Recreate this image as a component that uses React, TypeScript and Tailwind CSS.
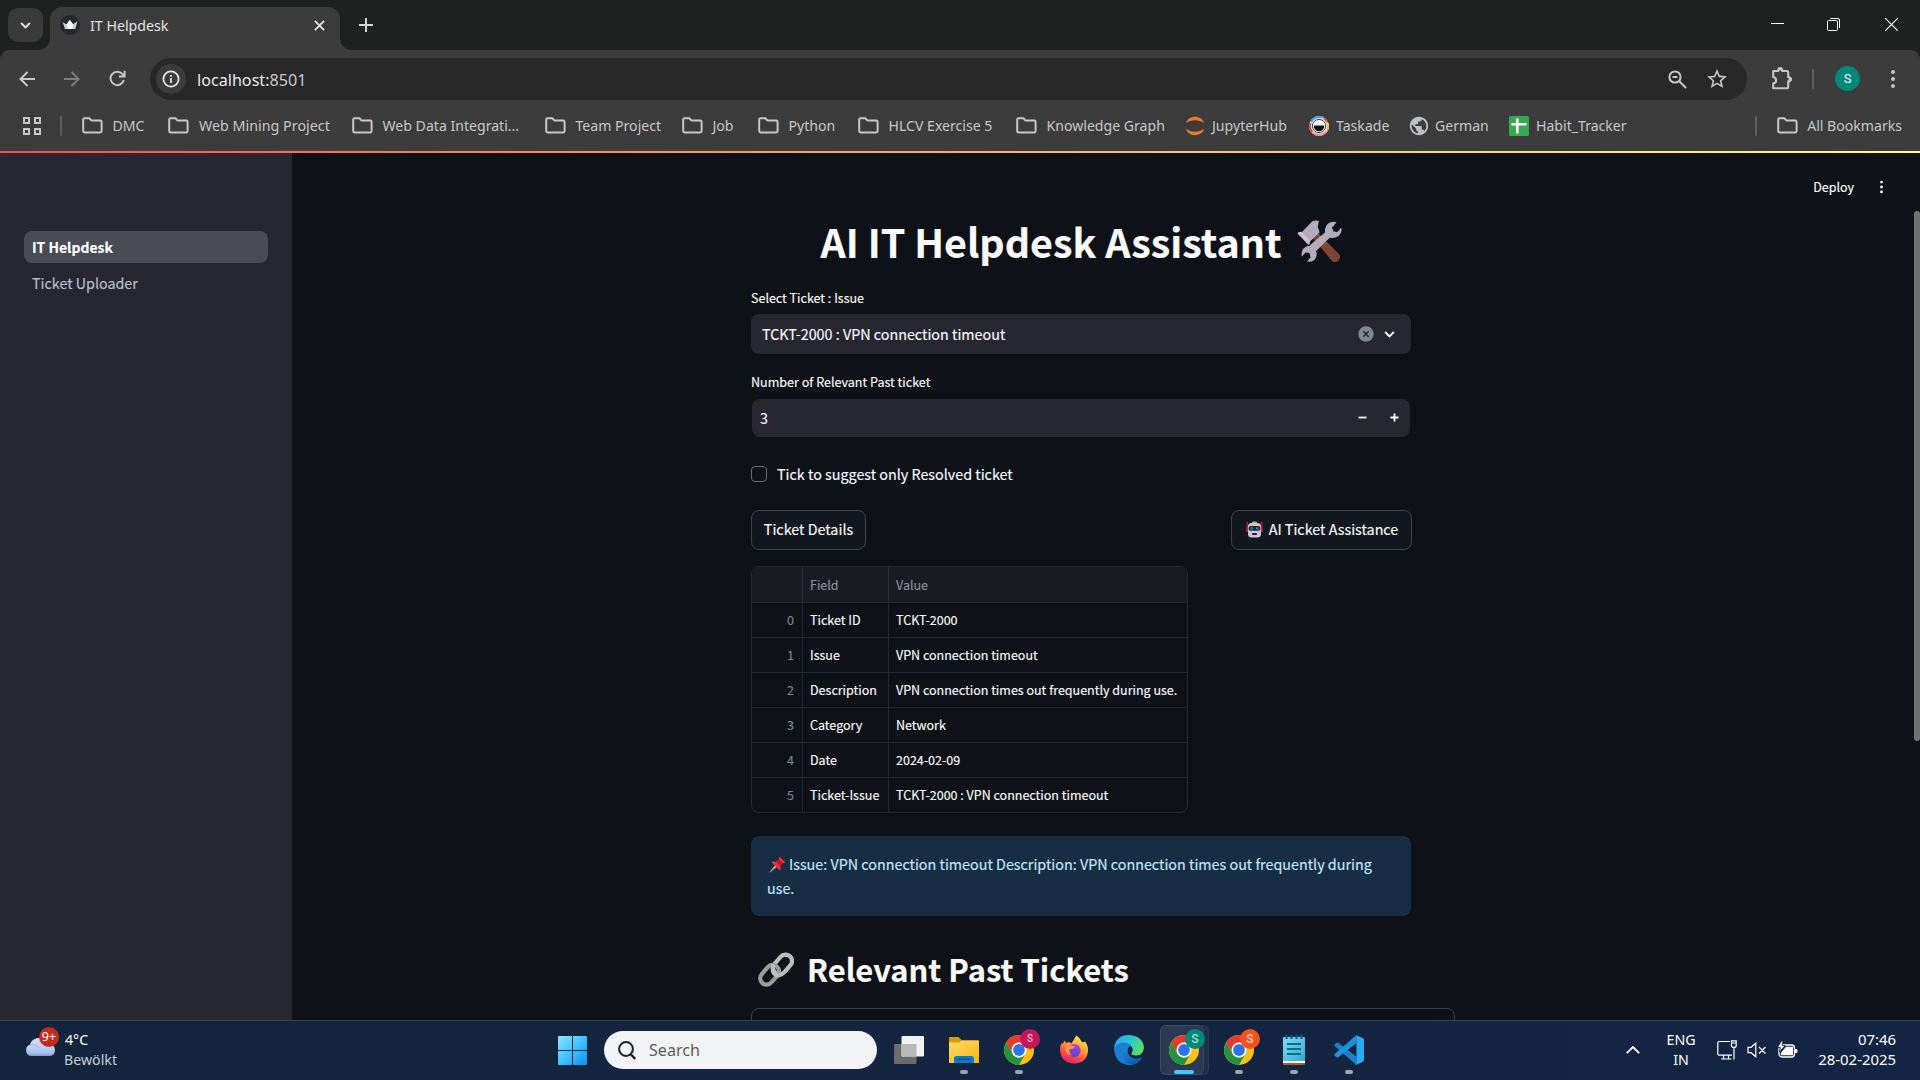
import React from 'react';
import { MdStarBorder, MdPublic } from 'react-icons/md';

type IconProps = { className?: string };

/* ---------- browser icons ---------- */

const Folder = () => (
  <svg viewBox="0 0 21 17" className="h-[17px] w-[21px] shrink-0" fill="none" stroke="#c7c7c7" strokeWidth="2" strokeLinejoin="round">
    <path d="M1.2 14V2.6Q1.2 1.2 2.6 1.2H7.4L9.6 3.6H18.2Q19.6 3.6 19.6 5V14Q19.6 15.4 18.2 15.4H2.6Q1.2 15.4 1.2 14Z" />
  </svg>
);

const AppsGrid = () => (
  <svg viewBox="0 0 20 20" className="h-5 w-5" fill="none" stroke="#c7c7c7" strokeWidth="2">
    <path d="M2 2h5v5H2zM13 2h5v5h-5zM2 13h5v5H2zM13 13h5v5h-5z" />
  </svg>
);

const Jupyter = () => (
  <svg viewBox="0 0 20 20" className="h-5 w-5 shrink-0" fill="#f37726">
    <path d="M1 7.2C3 -1.4 17 -1.4 19 7.2C14 3.4 6 3.4 1 7.2Z" />
    <path d="M1 12.8C3 21.4 17 21.4 19 12.8C14 16.6 6 16.6 1 12.8Z" />
  </svg>
);

const Taskade = () => (
  <svg viewBox="0 0 20 20" className="h-5 w-5 shrink-0">
    <circle cx="10" cy="10" r="10" fill="#e9e9e9" />
    <path d="M2 6A9 9 0 0 1 14 1.9" stroke="#4ea3e0" strokeWidth="2" fill="none" />
    <path d="M14.5 2.2A9 9 0 0 1 18.4 6.5" stroke="#e5484d" strokeWidth="2" fill="none" />
    <path d="M18.8 7.5A9 9 0 0 1 17.5 15" stroke="#f5c33b" strokeWidth="2" fill="none" />
    <path d="M17 15.6A9 9 0 0 1 4 16.7" stroke="#f08ba0" strokeWidth="2" fill="none" />
    <path d="M3.5 16.2A9 9 0 0 1 1.5 7" stroke="#e5484d" strokeWidth="2" fill="none" />
    <circle cx="10" cy="10" r="7.4" fill="#fff" />
    <circle cx="10" cy="10" r="6.6" fill="none" stroke="#222" strokeWidth=".9" />
    <path d="M5 9.600H15V11.500Q14 15.200 10 15.200Q6 15.200 5 11.500Z" fill="#111" />
  </svg>
);

const Globe = () => <MdPublic className="-mr-[2px] -ml-px h-[22px] w-[22px] shrink-0 text-[#bdc1c6]" />;

const Sheet = () => (
  <svg viewBox="0 0 20 20" className="h-5 w-5 shrink-0">
    <rect width="20" height="20" rx="1.5" fill="#34a853" />
    <path d="M8.3 2.5V17.5M2.5 8.3H17.5" stroke="#fff" strokeWidth="2.6" />
  </svg>
);

const Crown = () => (
  <svg viewBox="0 0 20 20" className="h-5 w-5">
    <circle cx="10" cy="10" r="10" fill="#262730" />
    <path d="M2.6 7L6.6 9.6L9.7 5L13 9.2L17.5 6.2L15.2 14H5Z" fill="#cfcfcf" />
    <path d="M6.6 9.6L9.7 5L13 9.2L12 14H8Z" fill="#fff" />
  </svg>
);

const Puzzle = () => (
  <svg viewBox="0 0 22 25" className="h-[25px] w-[22px]" fill="none" stroke="#c7c7c7" strokeWidth="2.1" strokeLinejoin="round">
    <path d="M2.2 5H7.2C7 1 11.4 1 11.2 5H16Q17.2 5 17.2 6.2V11.2C21 11 21 15.6 17.2 15.4V21Q17.2 22.2 16 22.2H2.2V17.6C6 17 6 11.6 2.2 11Z" />
    <path d="M7.2 4.6C7.2 1 11.2 1 11.2 4.6ZM17.6 11.2C20.8 11.2 20.8 15.4 17.6 15.4Z" fill="#c7c7c7" stroke="none" />
  </svg>
);

const Dots = ({ className }: IconProps) => (
  <svg viewBox="0 0 6 20" className={className} fill="currentColor">
    <circle cx="3" cy="3" r="2" />
    <circle cx="3" cy="10" r="2" />
    <circle cx="3" cy="17" r="2" />
  </svg>
);

/* ---------- emoji drawings ---------- */

const Tools = () => (
  <svg viewBox="0 0 46 43" className="h-[43px] w-[46px]">
    <path d="M15 17L20 12L42.5 34.5Q44 38 41 41Q38 43.5 34.5 40.5Z" fill="#7d4533" />
    <path d="M4.5 12.5L15 1.5Q17 .2 22 .8L20.8 6Q20.5 8 22 10L22.5 12.5L12.5 22Z" fill="#b4acbc" />
    <path d="M1.2 12.2L4.5 11.8L13 21L12.5 24.2Q11.5 25 10.5 24L1 14Q.3 13 1.2 12.2Z" fill="#cdc4d6" />
    <path d="M13 25L28 12.5Q27.5 6 32 3Q36 .8 39.5 2.5L35 7.5L36.5 11.5L40.5 12L44.2 7.5Q45.8 12.5 41.5 16Q37 19 33 17.5L19 31Q21 36 17.5 40Q14.5 42.5 10 41.5L13.5 37.5L12.5 33L8.5 32.5L5 36.5Q3.5 31 7 28Q9.5 25.5 13 26Z" fill="#b4acbc" />
  </svg>
);

const Robot = () => (
  <svg viewBox="0 0 17 17" className="h-[17px] w-[17px]">
    <path d="M1.2 0.5V9M15.8 0.5V9" stroke="#d1263c" strokeWidth="1.1" />
    <rect x="0.2" y="6" width="2.2" height="5" rx="1" fill="#c9213c" />
    <rect x="14.6" y="6" width="2.2" height="5" rx="1" fill="#c9213c" />
    <rect x="6" y="0.4" width="5" height="3" rx="1" fill="#f9a231" />
    <rect x="2" y="2" width="13" height="14.6" rx="3.6" fill="#cdc4d6" />
    <rect x="2.6" y="5" width="11.8" height="4.8" rx="2" fill="#26232f" />
    <circle cx="5.8" cy="7.4" r="1.3" fill="#1b84c4" />
    <circle cx="11.2" cy="7.4" r="1.3" fill="#1b84c4" />
    <rect x="6" y="12" width="5" height="2" rx=".8" fill="#26232f" />
  </svg>
);

const Pin = () => (
  <svg viewBox="0 0 17 17" className="h-[17px] w-[17px]">
    <path d="M0.8 16.2L6.2 9.4L7.8 10.8Z" fill="#b4acbc" stroke="#b4acbc" strokeWidth=".6" />
    <path d="M2.6 6.2Q4 4.6 6.6 6L10 3.6Q9.6 1.6 10.8 .8L16.4 6.2Q15.4 7.6 13.4 7L11.2 10.4Q12.4 13 10.8 14.4Z" fill="#f8312f" />
    <path d="M7 5.8L11.3 10.3L13.4 7L10 3.6Z" fill="#ca0b4a" />
  </svg>
);

const Link = () => (
  <svg viewBox="0 0 36 37" className="h-[37px] w-[36px]" fill="none" strokeWidth="4.2">
    <rect x="-6.4" y="-11" width="12.8" height="22" rx="6.4" transform="translate(24.6 13.4) rotate(41)" stroke="#bdbdbd" />
    <rect x="-6.4" y="-11" width="12.8" height="22" rx="6.4" transform="translate(11.6 23.8) rotate(41)" stroke="#9b9b9b" />
    <path d="M15.5 13.5Q13.6 18 16 22.5Q18.5 25.6 23 23.6" stroke="#bdbdbd" />
  </svg>
);

/* ---------- taskbar icons ---------- */

const Cloud = () => (
  <svg viewBox="0 0 30 20" className="h-5 w-[30px]">
    <defs>
      <linearGradient id="cloud" x1="0" y1="0" x2="0" y2="1">
        <stop offset="0" stopColor="#d6e4fb" />
        <stop offset=".8" stopColor="#a9c3f0" />
        <stop offset="1" stopColor="#7d9fd8" />
      </linearGradient>
    </defs>
    <path d="M6 20A6 6 0 0 1 5 8.5A9 9 0 0 1 20 4.5Q24 3.5 26.5 8Q30 10 30 14.5Q29.5 20 24 20Z" fill="url(#cloud)" />
    <path d="M5 9Q10 7 14 12" stroke="#9db8e8" fill="none" />
  </svg>
);

const WindowsLogo = () => (
  <svg viewBox="0 0 29 29" className="h-[29px] w-[29px]">
    <defs>
      <linearGradient id="win" x1="0" y1="0" x2="1" y2="1">
        <stop offset="0" stopColor="#8fe3ff" />
        <stop offset=".5" stopColor="#3fc3fd" />
        <stop offset="1" stopColor="#0c90f8" />
      </linearGradient>
    </defs>
    <path d="M1 0H14V14H0V1Q0 0 1 0ZM15 0H28Q29 0 29 1V14H15ZM0 15H14V29H1Q0 29 0 28ZM15 15H29V28Q29 29 28 29H15Z" fill="url(#win)" />
  </svg>
);

const TaskView = () => (
  <svg viewBox="0 0 30 28" className="h-7 w-[30px]">
    <rect y="8" width="22.5" height="20" rx="1" fill="#6b6b6b" />
    <rect x="7.5" y="0" width="22.5" height="20.5" rx="1" fill="#f1f1f1" />
    <rect x="7.5" y="8" width="15" height="12.5" fill="#b9b9b9" />
  </svg>
);

const Explorer = () => (
  <svg viewBox="0 0 30 26" className="h-[26px] w-[30px]">
    <defs>
      <linearGradient id="exp" x1="0" y1="0" x2="1" y2="1">
        <stop offset="0" stopColor="#ffdc6b" />
        <stop offset="1" stopColor="#f8b70e" />
      </linearGradient>
    </defs>
    <path d="M0 1Q0 0 1 0H9.5L13 3.5V9H0Z" fill="#dd9a05" />
    <path d="M0 5.5H10L13 3.3H29Q30 3.3 30 4.3V26H0Z" fill="url(#exp)" />
    <path d="M5 26V21.5Q5 19 7.5 19H22.5Q25 19 25 21.5V26Z" fill="#1278c8" />
    <path d="M8.5 22.5H21.5" stroke="#0a4d8c" strokeWidth="1.3" />
  </svg>
);

const Chrome = () => (
  <svg viewBox="0 0 30 30" className="h-[30px] w-[30px]">
    <circle cx="15" cy="15" r="15" fill="#fbc116" />
    <path d="M2.01 7.5A15 15 0 0 1 27.99 7.5H15L8.5 18.75Z" fill="#e33b2e" />
    <path d="M2.01 7.5L8.5 18.75A7.5 7.5 0 0 0 21.5 18.75L15 30A15 15 0 0 1 2.01 7.5Z" fill="#229342" />
    <circle cx="15" cy="15" r="7.5" fill="#fff" />
    <circle cx="15" cy="15" r="5.9" fill="#2b74e8" />
  </svg>
);

const ProfileChrome = ({ badge }: { badge: string }) => (
  <div className="relative h-[30px] w-[30px]">
    <Chrome />
    <span className={`absolute -top-[6px] left-4 flex h-5 w-5 items-center justify-center rounded-full font-['Roboto'] leading-none font-medium text-white/70 ${badge}`}>
      S
    </span>
  </div>
);

const Firefox = () => (
  <svg viewBox="0 0 30 30" className="h-[30px] w-[30px]">
    <defs>
      <linearGradient id="fox" x1=".8" y1="0" x2=".3" y2="1">
        <stop offset="0" stopColor="#fff14f" />
        <stop offset=".4" stopColor="#ffa436" />
        <stop offset=".7" stopColor="#ff4f45" />
        <stop offset="1" stopColor="#e0226f" />
      </linearGradient>
      <linearGradient id="foxcore" x1="0" y1="0" x2="0" y2="1">
        <stop offset="0" stopColor="#b23ff0" />
        <stop offset="1" stopColor="#5b46c4" />
      </linearGradient>
    </defs>
    <path d="M1 15Q1 10 3 7.5L3.3 9L6 5.5L7 8Q10 6.5 12.5 8.5Q15 4 17.5 .5Q21 3 23 7Q24.500 7.5 26 6.5Q29.5 11 29 16Q28 28 15 28.5Q2 28 1 15Z" fill="url(#fox)" />
    <circle cx="15" cy="15.5" r="6.6" fill="url(#foxcore)" />
    <path d="M6.5 11.5Q11 9.5 16.5 11.5Q14 14.5 10.5 14Q9.5 18 13 20.5Q8 20 6.5 16Z" fill="#ff9a2e" />
  </svg>
);

const Edge = () => (
  <svg viewBox="0 0 30 30" className="h-[30px] w-[30px]">
    <defs>
      <linearGradient id="edgetop" x1="0" y1=".3" x2="1" y2=".7">
        <stop offset="0" stopColor="#2aa9ea" />
        <stop offset=".5" stopColor="#2fc5cf" />
        <stop offset="1" stopColor="#66e34e" />
      </linearGradient>
      <linearGradient id="edgelow" x1="0" y1="0" x2="1" y2="1">
        <stop offset="0" stopColor="#1b8fe0" />
        <stop offset="1" stopColor="#0b4f9e" />
      </linearGradient>
    </defs>
    <path d="M0 13Q2 0 15 0Q29 1 30 13Q29 20.5 22 20.5Q17 20.5 17.5 18Q20 15 17.5 11.5Q12 5 0 13Z" fill="url(#edgetop)" />
    <path d="M0 13.5Q4 6.5 11 7.5Q16 8 18 12Q12 9.5 9.5 15Q8.5 25 20 25.5Q25 25.5 28 23Q23.5 30 15 30Q1 29 0 13.5Z" fill="#1a7fd4" />
    <path d="M8 15.5Q10 10.5 15.5 11Q12 15 15 20Q19 25.5 28 22.3Q25 28 18 29.7Q7 27 8 15.5Z" fill="url(#edgelow)" />
  </svg>
);

const Notepad = () => (
  <svg viewBox="0 0 22 30" className="h-[30px] w-[22px]">
    <defs>
      <linearGradient id="pad" x1="0" y1="0" x2="1" y2="1">
        <stop offset="0" stopColor="#7fdcf0" />
        <stop offset="1" stopColor="#35a9cf" />
      </linearGradient>
    </defs>
    <rect y="24" width="22" height="6" rx="1" fill="#b35c1e" />
    <rect y="22" width="22" height="6" fill="#f3f3f3" />
    <path d="M0 3Q0 2 1 2H21Q22 2 22 3V26H0Z" fill="url(#pad)" />
    <path d="M3.5 0V4M8.5 0V4M13.5 0V4M18.5 0V4" stroke="#0a5f86" strokeWidth="2.2" />
    <path d="M4 9H18M4 14H18M4 19H18" stroke="#0a6c93" strokeWidth="1.8" />
  </svg>
);

const VsCode = () => (
  <svg viewBox="0 0 30 30" className="h-[30px] w-[30px]">
    <path d="M.6 9.5L2.5 7.8Q3.3 7.3 4.2 7.8L22.5 21.8V30L.6 11Q0 10.2 .6 9.5Z" fill="#1b7fc9" />
    <path d="M.6 20.5L2.5 22.2Q3.3 22.7 4.2 22.2L22.5 8.2V0L.6 19Q0 19.8 .6 20.5Z" fill="#1f90dc" />
    <path d="M22.2 .2L29 3.3Q30 3.9 30 5V25Q30 26.1 29 26.7L22.2 29.8Q21.5 30 20.8 29.3Q22.5 30 22.5 28V2Q22.5 0 20.8 .7Q21.5 0 22.2 .2Z" fill="#2aa9f5" />
  </svg>
);

/* ---------- data ---------- */

const bookmarks = [
  { label: 'DMC', w: 'w-[86px]', icon: <Folder /> },
  { label: 'Web Mining Project', w: 'w-[184px]', icon: <Folder />, wide: true },
  { label: 'Web Data Integrati...', w: 'w-[193px]', icon: <Folder /> },
  { label: 'Team Project', w: 'w-[137px]', icon: <Folder /> },
  { label: 'Job', w: 'w-[76px]', icon: <Folder /> },
  { label: 'Python', w: 'w-[100px]', icon: <Folder /> },
  { label: 'HLCV Exercise 5', w: 'w-[158px]', icon: <Folder /> },
  { label: 'Knowledge Graph', w: 'w-[169px]', icon: <Folder /> },
  { label: 'JupyterHub', w: 'w-[124px]', icon: <Jupyter />, site: true },
  { label: 'Taskade', w: 'w-[100px]', icon: <Taskade />, site: true },
  { label: 'German', w: 'w-[100px]', icon: <Globe />, site: true },
  { label: 'Habit_Tracker', w: 'w-[130px]', icon: <Sheet />, site: true },
];

const rows = [
  ['Ticket ID', 'TCKT-2000'],
  ['Issue', 'VPN connection timeout'],
  ['Description', 'VPN connection times out frequently during use.'],
  ['Category', 'Network'],
  ['Date', '2024-02-09'],
  ['Ticket-Issue', 'TCKT-2000 : VPN connection timeout'],
];

const apps = [
  { name: 'explorer', icon: <Explorer />, running: true },
  { name: 'chrome-1', icon: <ProfileChrome badge="bg-[#c2185b] text-[10px]" />, running: true },
  { name: 'firefox', icon: <Firefox />, running: false },
  { name: 'edge', icon: <Edge />, running: false },
  { name: 'chrome-2', icon: <ProfileChrome badge="bg-[#00897b] text-[12px]" />, running: true, active: true },
  { name: 'chrome-3', icon: <ProfileChrome badge="bg-[#f4511e] text-[12px]" />, running: true },
  { name: 'notepad', icon: <Notepad />, running: true },
  { name: 'vscode', icon: <VsCode />, running: true },
];

/* ---------- sections ---------- */

function TabStrip() {
  return (
    <div className="flex h-[50px] bg-[#1f2120] text-[#e3e3e3]">
      <div className="mt-2 ml-2 flex h-[34px] w-[35px] items-center justify-center rounded-[10px] bg-[#3a3a3a]">
        <svg viewBox="0 0 12 8" className="h-[7px] w-[11px]" fill="none" stroke="#e3e3e3" strokeWidth="2.2"><path d="M1 1.2L6 6.2L11 1.2" /></svg>
      </div>
      <div className="relative mt-[7px] ml-[7px] flex w-[290px] items-center rounded-t-[12px] bg-[#3c3c3c] pb-[7px] pl-[10px]">
        <svg viewBox="0 0 12 12" className="absolute bottom-0 -left-3 h-3 w-3"><path d="M12 0V12H0A12 12 0 0 0 12 0Z" fill="#3c3c3c" /></svg>
        <svg viewBox="0 0 12 12" className="absolute -right-3 bottom-0 h-3 w-3"><path d="M0 0V12H12A12 12 0 0 1 0 0Z" fill="#3c3c3c" /></svg>
        <Crown />
        <span className="ml-[10px] flex-1 pt-px text-[14.2px] leading-5">IT Helpdesk</span>
        <svg viewBox="0 0 12 12" className="mr-[15px] h-[11px] w-[11px]" stroke="#e3e3e3" strokeWidth="2"><path d="M1 1L11 11M11 1L1 11" /></svg>
      </div>
      <svg viewBox="0 0 14 14" className="mt-[18px] ml-[19px] h-[14px] w-[14px]" stroke="#d5d5d5" strokeWidth="2"><path d="M7 0V14M0 7H14" /></svg>
      <div className="ml-auto flex items-center pr-[22px] pb-px">
        <svg viewBox="0 0 13 13" className="mr-[43px] h-[13px] w-[13px]" stroke="#fff"><path d="M0 5.5H13" /></svg>
        <svg viewBox="0 0 13 13" className="mr-[45px] h-[13px] w-[13px]" fill="none" stroke="#fff"><rect x=".5" y="2.5" width="10" height="10" rx="1" /><path d="M3 .5H11Q12.5 .5 12.5 2V10" /></svg>
        <svg viewBox="0 0 13 13" className="h-[13px] w-[13px]" stroke="#fff" strokeWidth="1.1"><path d="M0 0L13 13M13 0L0 13" /></svg>
      </div>
    </div>
  );
}

function Toolbar() {
  return (
    <div className="bg-[#1f2120]">
      <div className="flex h-[50px] items-center rounded-t-[9px] bg-[#3c3c3c] pt-2">
        <svg viewBox="0 0 16 16" className="mb-px ml-[19px] h-4 w-4" fill="none" stroke="#c7c7c7" strokeWidth="2"><path d="M16 8H2M8.5 1L1.5 8L8.5 15" /></svg>
        <svg viewBox="0 0 16 16" className="mb-px ml-[29px] h-4 w-4" fill="none" stroke="#7d7d7d" strokeWidth="2"><path d="M0 8H14M7.5 1L14.5 8L7.5 15" /></svg>
        <svg viewBox="0 0 17 17" className="mb-px ml-[29px] h-[17px] w-[17px]" fill="none" stroke="#c7c7c7" strokeWidth="2"><path d="M14.8 10A6.7 6.7 0 1 1 13.5 4.2L15 6" /><path d="M15.6 .8V6.6H9.8" /></svg>
        <div className="ml-[24px] flex h-[42px] w-[1597px] items-center rounded-full bg-[#282828] pl-[6px]">
          <div className="flex h-[30px] w-[30px] items-center justify-center rounded-full bg-[#3c3c3c]">
            <svg viewBox="0 0 18 18" className="h-[18px] w-[18px]" fill="none" stroke="#e3e3e3" strokeWidth="1.8"><circle cx="9" cy="9" r="7.6" /><path d="M9 8V13M9 5V6.8" /></svg>
          </div>
          <span className="ml-[11px] flex-1 pt-px text-[16.15px] leading-6 text-[#e8e8e8]">localhost:<span className="text-[#c7c7c7]">8501</span></span>
          <svg viewBox="0 0 19 19" className="mr-[18px] h-[19px] w-[19px]" fill="none" stroke="#c7c7c7" strokeWidth="2"><circle cx="7" cy="7" r="5.6" /><path d="M11.3 11.3L18 18M4.5 7H9.5" /></svg>
          <MdStarBorder className="mr-[18px] h-[24px] w-[24px] text-[#c7c7c7]" />
        </div>
        <div className="mb-[2px] ml-[24px]"><Puzzle /></div>
        <div className="ml-[19px] h-5 w-[2px] rounded bg-[#5e5e5e]" />
        <div className="mb-px ml-[21px] flex h-[25px] w-[25px] items-center justify-center rounded-full bg-[#00897b] font-['Roboto'] text-[13px] leading-none text-white">S</div>
        <Dots className="mb-px ml-[30px] h-[20px] w-[6px] text-[#c7c7c7]" />
      </div>
    </div>
  );
}

function BookmarksBar() {
  return (
    <div className="flex h-[51px] items-center bg-[#3c3c3c] pl-[22px] text-[14.1px] leading-5 whitespace-nowrap text-[#c7c7c7]">
      <AppsGrid />
      <div className="mr-5 ml-[18px] h-5 w-[2px] rounded bg-[#5e5e5e]" />
      {bookmarks.map((b) => (
        <div key={b.label} className={`flex shrink-0 items-center ${b.w}`}>
          {b.icon}
          <span className={b.site ? 'ml-[7px]' : b.wide ? 'ml-[10px] text-[14.3px]' : 'ml-[9.5px]'}>{b.label}</span>
        </div>
      ))}
      <div className="mr-[20px] ml-auto h-5 w-[2px] rounded bg-[#5e5e5e]" />
      <Folder />
      <span className="mr-[18px] ml-[9px]">All Bookmarks</span>
    </div>
  );
}

function Sidebar() {
  return (
    <aside className="h-full w-[292px] shrink-0 bg-[#262730] px-6 pt-[78px] text-[14.3px] leading-8">
      <div className="h-8 rounded-lg bg-[#494b55] pl-2 font-bold text-white"><span className="text-[13.95px]">IT Helpdesk</span></div>
      <div className="mt-1 h-8 pl-2 text-[#bcc0ca]">Ticket Uploader</div>
    </aside>
  );
}

function TicketTable() {
  return (
    <div className="mt-4 w-[437px] overflow-hidden rounded-lg border border-[#25282e] text-[12.5px] text-[#fafafa]">
      <div className="grid h-[35px] grid-cols-[51px_86px_1fr] items-stretch bg-[#1a1c24] leading-[35px] text-[#8e9095]">
        <div className="border-r border-[#2a2d33]" />
        <div className="border-r border-[#2a2d33] pl-[7px]">Field</div>
        <div className="pl-[7px]">Value</div>
      </div>
      {rows.map(([field, value], i) => (
        <div key={field} className="grid h-[35px] grid-cols-[51px_86px_1fr] border-t border-[#25282e] leading-[34px] whitespace-nowrap">
          <div className="border-r border-[#25282e] pr-2 text-right text-[#82848a]">{i}</div>
          <div className="border-r border-[#25282e] pl-[7px]">{field}</div>
          <div className="pl-[7px]">{value}</div>
        </div>
      ))}
    </div>
  );
}

function HelpdeskForm() {
  return (
    <main className="ml-[459px] w-[660px] text-[14.33px] text-[#fafafa]">
      <h1 className="flex h-[56px] items-center justify-center pl-px text-[39.4px] font-bold whitespace-nowrap">
        <span>AI IT Helpdesk Assistant</span>
        <span className="ml-[15px] pt-px"><Tools /></span>
      </h1>
      <div className="mt-[20px] text-[12.5px] leading-[18px]">Select Ticket : Issue</div>
      <div className="mt-[7px] flex h-10 items-center rounded-lg bg-[#262730] pl-[11px]">
        <span className="flex-1">TCKT-2000 : VPN connection timeout</span>
        <svg viewBox="0 0 16 16" className="h-4 w-4"><circle cx="8" cy="8" r="7.7" fill="#808495" /><path d="M5.3 5.3L10.7 10.7M10.7 5.3L5.3 10.7" stroke="#262730" strokeWidth="1.5" /></svg>
        <svg viewBox="0 0 12 8" className="mr-4 ml-[10px] h-[7px] w-[11px]" fill="none" stroke="#fafafa" strokeWidth="2.2"><path d="M1 1.2L6 6.2L11 1.2" /></svg>
      </div>
      <div className="mt-[19px] text-[12.55px] leading-[18px]">Number of Relevant Past ticket</div>
      <div className="mx-px mt-[8px] flex h-[38px] items-center rounded-lg bg-[#262730] pl-[8px]">
        <span className="flex-1">3</span>
        <svg viewBox="0 0 10 10" className="mr-[23px] mb-px h-[9px] w-[9px]" stroke="#fafafa" strokeWidth="2"><path d="M0.5 5H9.5" /></svg>
        <svg viewBox="0 0 10 10" className="mr-[11px] mb-px h-[9px] w-[9px]" stroke="#fafafa" strokeWidth="2"><path d="M0.5 5H9.5M5 .5V9.5" /></svg>
      </div>
      <div className="mt-[26px] flex h-[22px] items-center">
        <div className="h-4 w-4 rounded-[4px] border border-[#6a6c74]" />
        <span className="ml-[10px]">Tick to suggest only Resolved ticket</span>
      </div>
      <div className="-mr-px mt-[25px] flex justify-between">
        <button className="flex h-10 w-[115px] items-center justify-center rounded-lg border border-[#41444c] bg-[#131720] pb-[2px]">Ticket Details</button>
        <button className="flex h-10 w-[181px] items-center justify-center gap-[6px] rounded-lg border border-[#41444c] bg-[#131720] pb-[2px] pl-px">
          <Robot />
          <span>AI Ticket Assistance</span>
        </button>
      </div>
      <TicketTable />
      <div className="mt-[23px] h-[80px] rounded-lg bg-[#172d43] pt-4 pl-4 leading-[24.3px] whitespace-nowrap text-[#c3e7fd]">
        <div className="flex items-center">
          <span className="mr-[3px] ml-[2px]"><Pin /></span>
          <span>Issue: VPN connection timeout Description: VPN connection times out frequently during</span>
        </div>
        <div>use.</div>
      </div>
      <h2 className="mt-[28px] flex h-[50px] items-center pl-[7px] text-[30.9px] font-bold whitespace-nowrap">
        <Link />
        <span className="ml-[13px]">Relevant Past Tickets</span>
      </h2>
      <div className="mt-[14px] h-[60px] w-[704px] rounded-lg border border-[#3d4047]" />
    </main>
  );
}

function StreamlitPage() {
  return (
    <div className="flex h-[867px] overflow-hidden bg-[#0e1117] font-['Noto_Sans_CJK_SC',sans-serif] [-webkit-text-stroke:0.15px]">
      <Sidebar />
      <div className="relative flex-1 pt-[60px]">
        <HelpdeskForm />
        <div className="absolute top-[22px] right-[36px] flex items-center gap-[25px] text-[12.5px] leading-6 text-[#fafafa]">
          <span>Deploy</span>
          <Dots className="h-[14px] w-[5px]" />
        </div>
        <div className="absolute top-[58px] right-0 h-[530px] w-[6px] rounded-sm bg-[#6f7175]" />
      </div>
    </div>
  );
}

function Taskbar() {
  return (
    <div className="flex h-[60px] border-t border-[#36434f] bg-linear-to-r from-[#13253c] to-[#142444] text-[14.2px] text-white">
      <div className="relative flex w-[558px] items-start pt-[6px] pl-[25px]">
        <div className="mt-[9px]"><Cloud /></div>
        <span className="absolute top-[6px] left-[39px] flex h-5 w-5 items-center justify-center rounded-full bg-[#c42b1c] text-[12.5px] leading-none">9+</span>
        <div className="ml-[9px] leading-5">
          <div className="h-[20px] pl-px leading-[26px]">4°C</div>
          <div className="h-[20px] leading-[26px] text-[#c5cad1]">Bewölkt</div>
        </div>
      </div>
      <div className="mt-[15px]"><WindowsLogo /></div>
      <div className="mt-[10px] ml-[17px] flex h-[38px] w-[273px] items-center rounded-full bg-[#f2f3f5] pl-[14px]">
        <svg viewBox="0 0 18 19" className="h-[19px] w-[18px]" fill="none" stroke="#1f1f1f" strokeWidth="2"><circle cx="8" cy="8" r="6.9" /><path d="M12.5 13L17.2 18" strokeWidth="2.4" /></svg>
        <span className="ml-[13px] pt-px text-[16.1px] text-[#5c5c5c]">Search</span>
      </div>
      <div className="mt-[15px] ml-[17px]"><TaskView /></div>
      <div className="ml-[12.5px] flex">
        {apps.map((a) => (
          <div key={a.name} className="relative flex h-[58px] w-[55px] items-center justify-center">
            {a.active && (
              <>
                <div className="absolute top-1 left-[3px] h-[50px] w-[49px] rounded-md border border-white/5 bg-white/5" />
                <div className="absolute top-1 left-[3px] h-[50px] w-[44px] rounded-md border border-white/5 bg-white/5" />
              </>
            )}
            <div className="relative">{a.icon}</div>
            {a.running && <div className={`absolute top-[49px] h-1 rounded-full ${a.active ? 'w-5 bg-[#4cc2ff]' : 'w-2 bg-[#9aa3ae]'}`} />}
          </div>
        ))}
      </div>
      <div className="ml-auto flex items-center pr-6 pb-[2px]">
        <svg viewBox="0 0 14 8" className="h-2 w-[14px]" fill="none" stroke="#fff" strokeWidth="1.8"><path d="M.8 7.2L7 1L13.2 7.2" /></svg>
        <div className="ml-[26px] w-[30px] text-center leading-5"><div>ENG</div><div>IN</div></div>
        <svg viewBox="0 0 20 20" className="ml-[21px] h-5 w-5" fill="none" stroke="#fff" strokeWidth="1.2"><path d="M13 1.5H2Q.8 1.5 .8 2.7V14Q.8 15.2 2 15.2H15M4 19H14.5M6.5 15.5V19M11.5 15.5V19M14.5 .8H19.2V5.5Q19.2 7.5 17 7.5Q14.5 7.5 14.5 5.5ZM14.5 3H19M17 7.5V19.5" /></svg>
        <svg viewBox="0 0 20 16" className="ml-[10px] h-4 w-5" fill="none" stroke="#fff" strokeWidth="1.2"><path d="M1 5.3H4L8.8 1.2V14.8L4 10.7H1ZM12 5L18.5 11.5M18.5 5L12 11.5" /></svg>
        <svg viewBox="0 0 21 17" className="ml-[10px] h-[17px] w-[21px]"><rect x="2" y="4" width="15.5" height="12" rx="3" fill="none" stroke="#fff" strokeWidth="1.3" /><path d="M9 5.8H16V14.2H3.8V12ZM18 8H19.5Q20.5 8 20.5 10T19.5 12H18Z" fill="#fff" /><path d="M4.5 0L.5 6.5H3.5L2.5 11L8 4.5H5L6 0Z" fill="#fff" stroke="#14233f" strokeWidth=".8" /></svg>
        <div className="mb-[2px] ml-[19px] w-[79px] text-right text-[14.9px] leading-5"><div>07:46</div><div>28-02-2025</div></div>
      </div>
    </div>
  );
}

export default function App() {
  return (
    <div className="h-[1080px] w-[1920px] overflow-hidden bg-[#0e1117] font-['Noto_Sans',sans-serif]">
      <TabStrip />
      <Toolbar />
      <BookmarksBar />
      <div className="h-[2px] bg-linear-to-r from-[#ff4b4b] to-[#fffd80]" />
      <StreamlitPage />
      <Taskbar />
    </div>
  );
}
